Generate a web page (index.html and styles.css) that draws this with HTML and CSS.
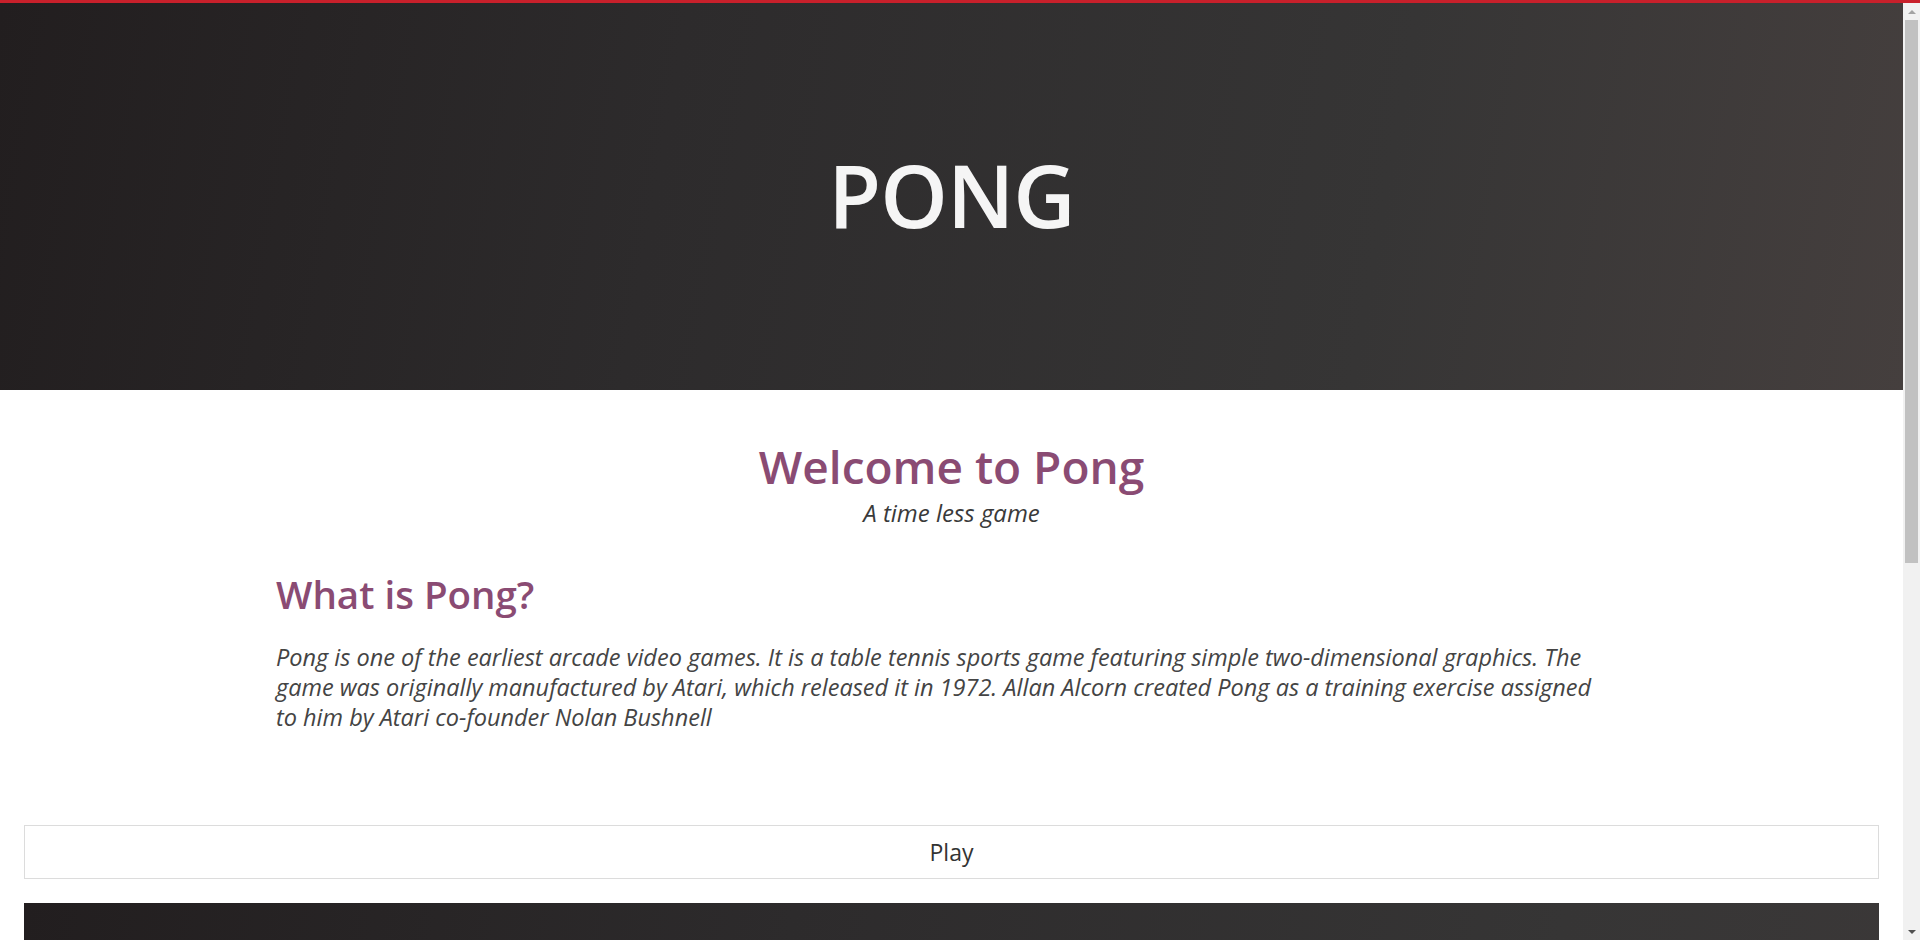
FILE: index.html
```html
<!DOCTYPE html>
<html lang="en">
<head>
<meta charset="utf-8">
<title>Pong</title>
<link rel="stylesheet" href="styles.css">
</head>
<body>
<div class="topbar"></div>
<div class="viewport">
  <div class="page">
    <header class="hero">
      <h1 class="hero-title">PONG</h1>
    </header>
    <section class="intro">
      <h2 class="intro-title">Welcome to Pong</h2>
      <p class="tagline">A time less game</p>
    </section>
    <section class="about">
      <h3 class="about-title">What is Pong?</h3>
      <p class="about-text">Pong is one of the earliest arcade video games. It is a table tennis sports game featuring simple two-dimensional graphics. The game was originally manufactured by Atari, which released it in 1972. Allan Alcorn created Pong as a training exercise assigned to him by Atari co-founder Nolan Bushnell</p>
    </section>
    <div class="play-wrap">
      <button class="play-btn" type="button">Play</button>
    </div>
    <div class="board"></div>
  </div>
  <div class="scrollbar">
    <div class="sb-arrow sb-up"></div>
    <div class="sb-track"><div class="sb-thumb"></div></div>
    <div class="sb-arrow sb-down"></div>
  </div>
</div>
</body>
</html>
```
FILE: styles.css
```css
html, body {
  margin: 0;
  padding: 0;
  height: 940px;
  overflow: hidden;
  background: #ffffff;
}
body {
  font-family: "Open Sans", "Noto Sans", "Liberation Sans", sans-serif;
  color: #333333;
  display: flex;
  flex-direction: column;
}
.topbar {
  height: 3px;
  background: #c8202b;
  flex: none;
}
.viewport {
  flex: 1;
  display: flex;
  min-height: 0;
}
.page {
  flex: 1;
  min-width: 0;
  overflow: hidden;
}
.hero {
  height: 387px;
  background: linear-gradient(100deg, #221e1f 0%, #2d2b2c 35%, #363535 72%, #453f3e 100%);
  display: flex;
  align-items: center;
  justify-content: center;
}
.hero-title {
  margin: 0 0 4px 0;
  font-size: 86px;
  font-weight: 600;
  line-height: 1;
  color: #f5f5f5;
  letter-spacing: -1px;
}
.intro {
  text-align: center;
  padding-top: 48px;
}
.intro-title {
  margin: 0;
  font-size: 46px;
  line-height: 56px;
  font-weight: 600;
  color: #8a4b73;
}
.tagline {
  margin: 4px 0 0 0;
  font-size: 24px;
  line-height: 30px;
  font-style: italic;
  color: #3a3a3a;
}
.about {
  max-width: 1351px;
  box-sizing: border-box;
  padding-right: 16px;
  margin: 42px auto 0;
}
.about-title {
  margin: 0;
  font-size: 38.5px;
  line-height: 48px;
  font-weight: 600;
  color: #8a4b73;
}
.about-text {
  margin: 24px 0 0 0;
  font-size: 23.5px;
  line-height: 30px;
  font-style: italic;
  color: #444444;
}
.play-wrap {
  padding: 93px 24px 0;
}
.play-btn {
  display: block;
  width: 100%;
  height: 54px;
  border: 1px solid #dcdcdc;
  background: #ffffff;
  font-family: inherit;
  font-size: 23px;
  color: #333333;
  padding: 0;
  cursor: pointer;
}
.board {
  margin: 24px 24px 0;
  height: 420px;
  background: linear-gradient(100deg, #221e1f 0%, #2d2b2c 40%, #363535 80%, #3b3838 100%);
}
.scrollbar {
  width: 17px;
  flex: none;
  background: #f1f1f1;
  display: flex;
  flex-direction: column;
}
.sb-arrow {
  height: 17px;
  flex: none;
  display: flex;
  align-items: center;
  justify-content: center;
}
.sb-up::before {
  content: "";
  border-left: 4px solid transparent;
  border-right: 4px solid transparent;
  border-bottom: 4px solid #a3a3a3;
}
.sb-down::before {
  content: "";
  border-left: 4px solid transparent;
  border-right: 4px solid transparent;
  border-top: 4px solid #505050;
}
.sb-track {
  flex: 1;
  padding: 0 2px;
}
.sb-thumb {
  height: 543px;
  background: #c1c1c1;
}
```
